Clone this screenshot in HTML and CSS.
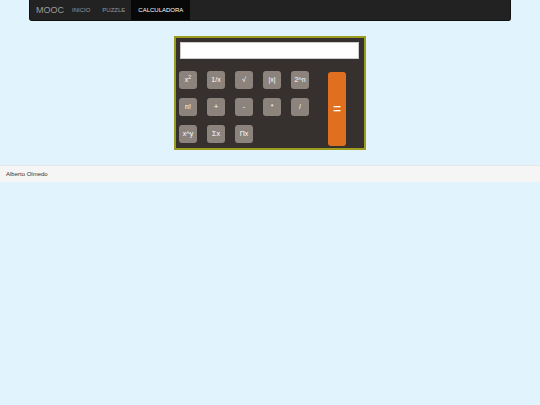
FILE: index.html
```html
<!DOCTYPE html>
<html>
<head>
<meta charset="utf-8">
<link rel="stylesheet" href="styles.css">
</head>
<body>
<nav class="navbar">
  <span class="brand">MOOC</span>
  <span class="nav-link">INICIO</span>
  <span class="nav-link">PUZZLE</span>
  <span class="nav-link active">CALCULADORA</span>
</nav>
<main class="main">
  <div class="calc">
    <div class="display"></div>
    <div class="body">
      <div class="keys">
        <button class="key">x<sup>2</sup></button>
        <button class="key">1/x</button>
        <button class="key">√</button>
        <button class="key">|x|</button>
        <button class="key">2^n</button>
        <button class="key">n!</button>
        <button class="key">+</button>
        <button class="key">-</button>
        <button class="key">*</button>
        <button class="key">/</button>
        <button class="key">x^y</button>
        <button class="key">Σx</button>
        <button class="key">Πx</button>
      </div>
      <button class="equals">=</button>
    </div>
  </div>
</main>
<footer class="footer">Alberto Olmedo</footer>
</body>
</html>
```

FILE: styles.css
```css
html, body {
  margin: 0;
  padding: 0;
}
body {
  background: #e1f3fd;
  font-family: "Liberation Sans", Arial, sans-serif;
  width: 540px;
  height: 405px;
}
.navbar {
  margin: 0 29px;
  height: 21px;
  box-sizing: border-box;
  background: #222222;
  border: 1px solid #111;
  border-top: none;
  border-radius: 0 0 3px 3px;
  display: flex;
  align-items: stretch;
  padding-left: 6px;
}
.brand {
  color: #9d9d9d;
  font-size: 9px;
  line-height: 20px;
  padding: 0 2px 0 0;
}
.nav-link {
  color: #999999;
  font-size: 6px;
  line-height: 20px;
  padding: 0 6px;
}
.nav-link.active {
  background: #080808;
  color: #ffffff;
  padding: 0 7px;
}
.main {
  padding-top: 15px;
  display: flex;
  justify-content: center;
}
.calc {
  width: 192px;
  height: 114px;
  box-sizing: border-box;
  border: 2px solid #9c9c1e;
  background: #36312e;
  padding: 4px 0 0 3px;
}
.display {
  width: 179px;
  height: 17px;
  background: #ffffff;
  margin-left: 1px;
  border: 1px solid #ccc;
  box-sizing: border-box;
}
.body {
  display: flex;
  margin-top: 12px;
}
.keys {
  display: grid;
  grid-template-columns: repeat(5, 18px);
  grid-auto-rows: 18px;
  column-gap: 10px;
  row-gap: 9px;
  align-content: start;
}
.key {
  width: 18px;
  height: 18px;
  padding: 0;
  border: none;
  border-radius: 3px;
  background: #8c837c;
  color: #ffffff;
  font-family: "Liberation Sans", Arial, sans-serif;
  font-size: 7px;
  line-height: 18px;
  text-align: center;
}
.key sup {
  font-size: 5px;
  line-height: 0;
  vertical-align: 3px;
}
.equals {
  margin-left: 19px;
  margin-top: 1px;
  width: 18px;
  height: 74px;
  padding: 0;
  border: none;
  border-radius: 3px;
  background: #e07020;
  color: #ffffff;
  font-family: "Liberation Sans", Arial, sans-serif;
  font-size: 14px;
}
.footer {
  margin-top: 15px;
  height: 17px;
  box-sizing: border-box;
  background: #f5f5f5;
  border-top: 1px solid #e5e5e5;
  color: #333;
  font-size: 6px;
  line-height: 16px;
  padding-left: 6px;
}
```
